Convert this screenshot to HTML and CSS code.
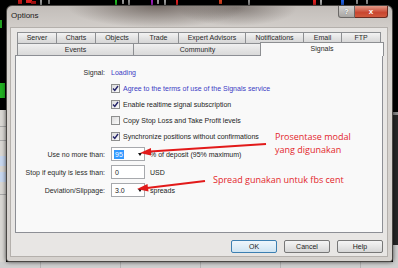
FILE: index.html
```html
<!DOCTYPE html>
<html lang="en">
  <head>
    <meta charset="UTF-8" />
    <title>Options</title>
    <link rel="stylesheet" href="styles.css">
  </head>
  <body>
    <div class="desktop">
      <!-- terminal behind the dialog -->
      <svg class="backdrop" width="398" height="268" viewBox="0 0 398 268">
        <rect x="0" y="0" width="398" height="268" fill="#000" />
        <rect x="18" y="0" width="4" height="4" fill="#c01818" />
        <rect x="26" y="0" width="6" height="3" fill="#e02020" />
        <rect x="31" y="1" width="5" height="3" fill="#b01010" />
        <rect x="40" y="0" width="2" height="5" fill="#9a9a9a" />
        <rect x="48" y="0" width="2" height="4" fill="#7a7a7a" />
        <rect x="115" y="0" width="2" height="6" fill="#20c020" />
        <rect x="122" y="0" width="2" height="4" fill="#9a9a9a" />
        <rect x="128" y="0" width="2" height="5" fill="#8a8a8a" />
        <rect x="151" y="0" width="2" height="5" fill="#a020c0" />
        <rect x="157" y="0" width="2" height="4" fill="#9a9a9a" />
        <rect x="164" y="0" width="2" height="5" fill="#9a9a9a" />
        <rect x="176" y="0" width="2" height="5" fill="#e02020" />
        <rect x="219" y="0" width="3" height="4" fill="#d04020" />
        <rect x="248" y="0" width="2" height="5" fill="#8a8a8a" />
        <rect x="313" y="0" width="3" height="5" fill="#e02020" />
        <rect x="320" y="0" width="2" height="5" fill="#aaaaaa" />
        <rect x="341" y="0" width="3" height="5" fill="#2060e0" />
        <rect x="356" y="0" width="2" height="4" fill="#8a8a8a" />
        <rect x="366" y="0" width="2" height="4" fill="#8a8a8a" />
        <rect x="0" y="20" width="2" height="8" fill="#20a020" />
        <rect x="0" y="83" width="5" height="15" fill="#22b022" />
        <rect x="0" y="110" width="6" height="158" fill="#d8d6d2" />
        <rect x="0" y="126" width="6" height="1" fill="#a8a8a8" />
        <rect x="0" y="140" width="6" height="1" fill="#a8a8a8" />
        <rect x="0" y="156" width="6" height="10" fill="#c6d6ee" />
        <rect x="0" y="172" width="6" height="10" fill="#c6d6ee" />
        <rect x="0" y="194" width="6" height="1" fill="#a8a8a8" />
        <rect x="393" y="112" width="5" height="3" fill="#8a8a8a" />
        <rect x="393" y="115" width="5" height="130" fill="#262626" />
        <rect x="393" y="245" width="5" height="23" fill="#cfcfcf" />
        <rect x="0" y="262" width="398" height="6" fill="#cfcfcf" />
        <rect x="40" y="262" width="1" height="6" fill="#b4b4b4" />
        <rect x="120" y="262" width="1" height="6" fill="#b4b4b4" />
        <rect x="200" y="262" width="1" height="6" fill="#b4b4b4" />
        <rect x="280" y="262" width="1" height="6" fill="#b4b4b4" />
        <rect x="360" y="262" width="1" height="6" fill="#b4b4b4" />
      </svg>

      <div class="window">
        <div class="titlebar">
          <span class="title">Options</span>
          <div class="caption-buttons">
            <span class="cap-btn cap-help">?</span>
            <span class="cap-btn cap-close">x</span>
          </div>
        </div>

        <div class="client">
          <div class="tabs tabs-back">
            <span class="tab">Server</span>
            <span class="tab">Charts</span>
            <span class="tab">Objects</span>
            <span class="tab">Trade</span>
            <span class="tab">Expert Advisors</span>
            <span class="tab">Notifications</span>
            <span class="tab">Email</span>
            <span class="tab">FTP</span>
          </div>
          <div class="tabs tabs-front">
            <span class="tab">Events</span>
            <span class="tab">Community</span>
            <span class="tab tab-active">Signals</span>
          </div>

          <div class="panel">
            <div class="row">
              <span class="lbl">Signal:</span>
              <span class="link">Loading</span>
            </div>
            <div class="row">
              <span class="lbl"></span>
              <span class="check">
                <span class="box">
                  <svg width="9" height="9" viewBox="0 0 9 9"><path d="M2 4.5 L3.8 6.5 L7 2" stroke="#24246a" stroke-width="1.4" fill="none" /></svg>
                </span>
                <span class="link">Agree to the terms of use of the Signals service</span>
              </span>
            </div>
            <div class="row">
              <span class="lbl"></span>
              <span class="check">
                <span class="box">
                  <svg width="9" height="9" viewBox="0 0 9 9"><path d="M2 4.5 L3.8 6.5 L7 2" stroke="#24246a" stroke-width="1.4" fill="none" /></svg>
                </span>
                <span>Enable realtime signal subscription</span>
              </span>
            </div>
            <div class="row">
              <span class="lbl"></span>
              <span class="check">
                <span class="box"></span>
                <span>Copy Stop Loss and Take Profit levels</span>
              </span>
            </div>
            <div class="row">
              <span class="lbl"></span>
              <span class="check">
                <span class="box">
                  <svg width="9" height="9" viewBox="0 0 9 9"><path d="M2 4.5 L3.8 6.5 L7 2" stroke="#24246a" stroke-width="1.4" fill="none" /></svg>
                </span>
                <span>Synchronize positions without confirmations</span>
              </span>
            </div>

            <div class="row field first-field">
              <span class="lbl">Use no more than:</span>
              <span class="input">
                <span class="selected">95</span>
                <span class="drop"></span>
              </span>
              <span class="unit">% of deposit (95% maximum)</span>
            </div>
            <div class="row field">
              <span class="lbl">Stop if equity is less than:</span>
              <span class="input">0</span>
              <span class="unit">USD</span>
            </div>
            <div class="row field">
              <span class="lbl">Deviation/Slippage:</span>
              <span class="input">
                <span>3.0</span>
                <span class="drop"></span>
              </span>
              <span class="unit">spreads</span>
            </div>
          </div>

          <div class="buttons">
            <span class="btn btn-default">OK</span>
            <span class="btn">Cancel</span>
            <span class="btn">Help</span>
          </div>
        </div>
      </div>

      <!-- red notes drawn over the screenshot -->
      <svg class="arrows" width="398" height="268" viewBox="0 0 398 268">
        <path d="M266 144 L150 151.5" stroke="#e21a1a" stroke-width="2" fill="none" />
        <polygon points="140,153 151,148 151,155.5" fill="#e21a1a" />
        <path d="M205 181 L147 188" stroke="#e21a1a" stroke-width="2" fill="none" />
        <polygon points="137,189 147.5,184 148.5,191.5" fill="#e21a1a" />
      </svg>
      <div class="note note-modal">Prosentase modal<br />yang digunakan</div>
      <div class="note note-spread">Spread gunakan untuk fbs cent</div>
    </div>
  </body>
</html>
```

FILE: styles.css
```css
      body {
        margin: 0;
        background: #000;
        font-family: "Liberation Sans", Arial, sans-serif;
        font-size: 7px;
        color: #1c1c1c;
      }
      .desktop {
        position: relative;
        width: 398px;
        height: 268px;
        overflow: hidden;
      }
      .backdrop {
        display: block;
      }

      /* dialog window */
      .window {
        position: absolute;
        left: 6px;
        top: 5px;
        width: 387px;
        height: 257px;
        box-sizing: border-box;
        border: 1px solid #4a4744;
        border-radius: 6px 6px 3px 3px;
        padding: 0 4px 4px 4px;
        display: flex;
        flex-direction: column;
        background: radial-gradient(ellipse 90px 22px at 150px 0, rgba(70, 58, 52, 0.6), transparent),
          radial-gradient(ellipse 60px 18px at 230px 2px, rgba(60, 50, 45, 0.45), transparent),
          linear-gradient(#c2bdb9, #d8d4d0 30px, #d6d2ce);
        box-shadow: 0 0 4px rgba(0, 0, 0, 0.7);
      }
      .titlebar {
        height: 21px;
        display: flex;
        align-items: flex-start;
      }
      .title {
        padding-top: 4px;
        line-height: 12px;
        font-size: 8px;
        color: #1a1a1a;
      }
      .caption-buttons {
        margin-left: auto;
        display: flex;
      }
      .cap-btn {
        height: 12px;
        box-sizing: border-box;
        display: flex;
        align-items: center;
        justify-content: center;
        font-weight: bold;
        font-size: 8px;
        color: #fff;
      }
      .cap-help {
        width: 17px;
        border: 1px solid #6b6866;
        border-top: none;
        border-radius: 0 0 0 3px;
        background: linear-gradient(#d4d2d0, #a9a6a3);
        text-shadow: 0 0 1px #555;
      }
      .cap-close {
        width: 33px;
        border: 1px solid #6a2a20;
        border-top: none;
        border-left: none;
        border-radius: 0 0 3px 0;
        background: linear-gradient(#e39a88, #c9452f 60%, #d05a3e);
      }

      .client {
        flex: 1;
        background: #e8e6e4;
        border: 1px solid #b4b0ac;
        margin-left: -1px;
        padding: 4px 4px 0 4px;
        display: flex;
        flex-direction: column;
      }

      /* tabs */
      .tabs {
        display: grid;
        margin-left: 2px;
      }
      .tabs-back {
        height: 11px;
        grid-template-columns: 40px 39px 43px 40px 67px 58px 38px 39px;
      }
      .tabs-front {
        height: 12px;
        grid-template-columns: 117px 128px 1fr;
      }
      .tab {
        box-sizing: border-box;
        border: 1px solid #8d8f92;
        border-bottom: none;
        border-left: none;
        background: linear-gradient(#f3f3f3, #e3e3e3 50%, #d6d6d6);
        text-align: center;
        line-height: 10px;
        white-space: nowrap;
        color: #2a2a2a;
      }
      .tab:first-child {
        border-left: 1px solid #8d8f92;
      }
      .tabs-front .tab {
        line-height: 11px;
        background: linear-gradient(#f0f0f0, #e4e4e4 50%, #dadada);
      }
      .tabs-front .tab-active {
        position: relative;
        z-index: 1;
        margin: -1px -1px -1px -2px;
        border-left: 1px solid #8d8f92;
        background: #f9f9f9;
        line-height: 12px;
      }

      .panel {
        height: 178px;
        box-sizing: border-box;
        border: 1px solid #8d8f95;
        background: #f9f9f9;
        padding-top: 8px;
      }
      .row {
        display: flex;
        align-items: center;
        gap: 6px;
        height: 16px;
      }
      .lbl {
        width: 89px;
        flex: none;
        text-align: right;
        color: #2a2a2a;
      }
      .link {
        color: #3b3bc4;
      }
      .check {
        display: flex;
        align-items: center;
        gap: 3px;
      }
      .box {
        width: 9px;
        height: 9px;
        box-sizing: border-box;
        border: 1px solid #8e8f8f;
        background: linear-gradient(135deg, #dcdcdc, #fbfbfb);
        display: flex;
        align-items: center;
        justify-content: center;
      }
      .box svg {
        display: block;
        margin: -1px;
      }
      .row.field {
        height: 18px;
      }
      .first-field {
        margin-top: 1px;
      }
      .input {
        width: 34px;
        height: 14px;
        box-sizing: border-box;
        border: 1px solid #a7a9ad;
        background: #fff;
        padding: 0 2px 0 3px;
        display: flex;
        align-items: center;
      }
      .selected {
        background: #3399ff;
        color: #fff;
        line-height: 9px;
        margin-left: -1px;
        padding: 0 1px;
      }
      .drop {
        margin-left: auto;
        width: 0;
        height: 0;
        border-left: 2.5px solid transparent;
        border-right: 2.5px solid transparent;
        border-top: 3px solid #111;
      }
      .unit {
        margin-left: -1px;
      }

      .buttons {
        display: flex;
        justify-content: flex-end;
        gap: 7px;
        margin-top: 7px;
        padding-right: 0;
      }
      .btn {
        width: 46px;
        height: 13px;
        box-sizing: border-box;
        border: 1px solid #777;
        border-radius: 2px;
        background: linear-gradient(#f4f4f4, #e6e6e6 50%, #d6d6d6);
        text-align: center;
        line-height: 11px;
      }
      .btn-default {
        border-color: #3c7fb1;
        background: linear-gradient(#eef6fb, #dfeef8 50%, #cfe4f2);
      }

      /* annotations */
      .arrows {
        position: absolute;
        left: 0;
        top: 0;
      }
      .note {
        position: absolute;
        font-family: "Open Sans", sans-serif;
        font-size: 9px;
        line-height: 13px;
        color: #e3262b;
        white-space: nowrap;
      }
      .note-modal {
        left: 275px;
        top: 130px;
      }
      .note-spread {
        left: 213px;
        top: 173px;
      }
```
